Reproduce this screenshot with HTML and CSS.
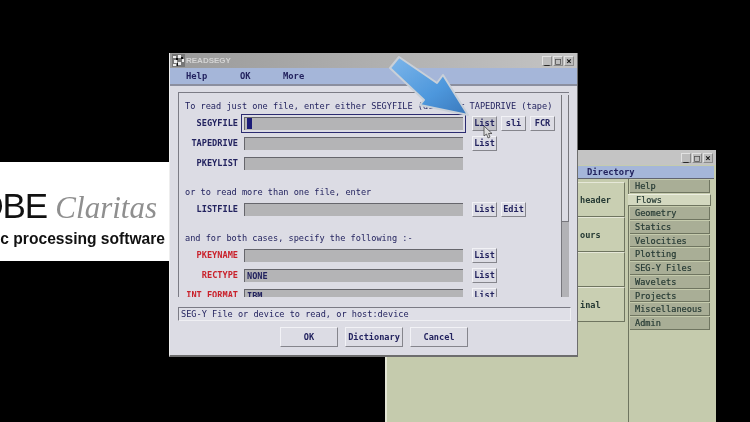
FILE: index.html
```html
<!DOCTYPE html>
<html lang="en">
<head>
    <meta charset="UTF-8">
    <title>READSEGY</title>
    <link rel="stylesheet" href="styles.css">
</head>
<body>
    <div class="desktop">
        <div class="logo">
            <div class="logo-name">GLOBE <em>Claritas</em></div>
            <div class="logo-sub">seismic processing software</div>
        </div>

        <!-- flow manager window behind the dialog -->
        <div class="flowwin">
            <div class="titlebar back-title">
                <span class="spacer"></span>
                <span class="winbtn">_</span><span class="winbtn">□</span><span class="winbtn">×</span>
            </div>
            <div class="back-menu"><span>Directory</span></div>
            <div class="back-body">
                <div class="back-left">
                    <div class="big-btn">header</div>
                    <div class="big-btn">ours</div>
                    <div class="big-btn"></div>
                    <div class="big-btn">inal</div>
                </div>
                <div class="back-right">
                    <div class="side-btn">Help</div>
                    <div class="side-btn active">Flows</div>
                    <div class="side-btn">Geometry</div>
                    <div class="side-btn">Statics</div>
                    <div class="side-btn">Velocities</div>
                    <div class="side-btn">Plotting</div>
                    <div class="side-btn">SEG-Y Files</div>
                    <div class="side-btn">Wavelets</div>
                    <div class="side-btn">Projects</div>
                    <div class="side-btn">Miscellaneous</div>
                    <div class="side-btn">Admin</div>
                </div>
            </div>
        </div>

        <!-- READSEGY dialog -->
        <div class="dialog">
            <div class="titlebar">
                <svg class="winicon" width="13" height="13" viewBox="0 0 13 13">
                    <rect width="13" height="13" fill="#777"/>
                    <path d="M1 2h3v2H1zM6 1h3v3H6zM10 5h2v3h-2zM2 6h3v3H2zM6 8h3v3H6zM1 10h3v2H1z" fill="#eee"/>
                    <path d="M4 4h2v2H4zM9 3h2v2H9zM5 9h1v3H5z" fill="#111"/>
                </svg>
                <span class="title-text">READSEGY</span>
                <span class="spacer"></span>
                <span class="winbtn">_</span><span class="winbtn">□</span><span class="winbtn">×</span>
            </div>
            <div class="menubar">
                <span>Help</span><span>OK</span><span>More</span>
            </div>
            <div class="pane">
                <div class="form">
                    <div class="note">To read just one file, enter either SEGYFILE (disk) or TAPEDRIVE (tape)</div>
                    <div class="row">
                        <label>SEGYFILE</label>
                        <div class="field focus"><span class="caret"></span></div>
                        <span class="btn hover">List</span><span class="btn">sli</span><span class="btn">FCR</span>
                    </div>
                    <div class="row">
                        <label>TAPEDRIVE</label>
                        <div class="field"></div>
                        <span class="btn">List</span>
                    </div>
                    <div class="row">
                        <label>PKEYLIST</label>
                        <div class="field"></div>
                    </div>
                    <div class="note gap">or to read more than one file, enter</div>
                    <div class="row">
                        <label>LISTFILE</label>
                        <div class="field"></div>
                        <span class="btn">List</span><span class="btn">Edit</span>
                    </div>
                    <div class="note gap">and for both cases, specify the following :-</div>
                    <div class="row">
                        <label class="req">PKEYNAME</label>
                        <div class="field"></div>
                        <span class="btn">List</span>
                    </div>
                    <div class="row">
                        <label class="req">RECTYPE</label>
                        <div class="field">NONE</div>
                        <span class="btn">List</span>
                    </div>
                    <div class="row">
                        <label class="req">INT FORMAT</label>
                        <div class="field">IBM</div>
                        <span class="btn">List</span>
                    </div>
                </div>
                <div class="scrollbar"><div class="thumb"></div></div>
            </div>
            <div class="message">SEG-Y File or device to read, or host:device</div>
            <div class="actions">
                <span class="action">OK</span>
                <span class="action">Dictionary</span>
                <span class="action">Cancel</span>
            </div>
        </div>

        <!-- tutorial arrow and mouse pointer on top -->
        <svg class="arrow" width="90" height="75" viewBox="0 0 90 75">
            <defs>
                <linearGradient id="arrowfill" x1="0" y1="0" x2="1" y2="1">
                    <stop offset="0" stop-color="#7db6ea"/>
                    <stop offset="0.6" stop-color="#4d97dc"/>
                    <stop offset="1" stop-color="#3a78bb"/>
                </linearGradient>
            </defs>
            <path d="M14 7 L5 18 L39 50 L35 55 L83 65 L58 25 L52 33 Z" fill="url(#arrowfill)" stroke="#c9d0d8" stroke-width="2" stroke-linejoin="round"/>
        </svg>
        <svg class="pointer" width="10" height="14" viewBox="0 0 10 14">
            <path d="M1 1 L1 11 L3.500 9 L5 13 L7 12 L5.500 8.500 L9 8.500 Z" fill="#ddd" stroke="#444" stroke-width="0.8"/>
        </svg>
    </div>
</body>
</html>
```

FILE: styles.css
```css
* {
    box-sizing: border-box;
}
html, body {
    margin: 0;
    height: 100%;
    background: #000;
}
body {
    font-family: "DejaVu Sans Mono", "Liberation Mono", monospace;
    font-size: 8.6px;
    color: #23235f;
}
.desktop {
    position: relative;
    width: 750px;
    height: 422px;
    overflow: hidden;
    background: #000;
    filter: blur(0.35px);
}
.spacer {
    flex: 1;
}

/* logo strip */
.logo {
    position: absolute;
    left: 0;
    top: 162px;
    width: 172px;
    height: 99px;
    background: #fff;
    display: flex;
    flex-direction: column;
    align-items: flex-end;
    padding: 26px 7px 0 0;
    white-space: nowrap;
    font-family: "Liberation Sans", sans-serif;
    color: #111;
}
.logo-name {
    font-size: 35px;
    line-height: 36px;
    letter-spacing: -1.2px;
    margin-right: 8px;
}
.logo-name em {
    font-family: "Liberation Serif", serif;
    font-size: 31px;
    color: #8f8f8f;
    letter-spacing: 0;
}
.logo-sub {
    font-size: 15.6px;
    font-weight: bold;
    line-height: 18px;
    margin-top: 4px;
}

/* window chrome */
.titlebar {
    display: flex;
    align-items: center;
    height: 15px;
    padding: 0 3px 0 2px;
    background: linear-gradient(90deg, #9a9a9a, #c4c4c4);
}
.winicon {
    margin-right: 1px;
}
.title-text {
    font-family: "Liberation Sans", sans-serif;
    font-size: 8px;
    font-weight: bold;
    color: #d4d4d4;
}
.winbtn {
    width: 10px;
    height: 10px;
    margin-left: 1px;
    background: #bdbdbd;
    border: 1px solid;
    border-color: #e2e2e2 #8a8a8a #8a8a8a #e2e2e2;
    color: #111;
    font-size: 9px;
    font-weight: bold;
    line-height: 8px;
    text-align: center;
}

/* dialog */
.dialog {
    position: absolute;
    left: 169px;
    top: 53px;
    width: 409px;
    height: 304px;
    background: #dcdce4;
    border-right: 1px solid #6d6d6d;
    border-bottom: 2px solid #6d6d6d;
    border-left: 1px solid #eee;
}
.menubar {
    display: flex;
    height: 18px;
    align-items: center;
    background: #a5b6d9;
    border-bottom: 2px solid #8b8f9f;
    padding-left: 16px;
    font-weight: bold;
    font-size: 8.800px;
}
.menubar span {
    width: 54px;
}
.menubar span:nth-child(2) {
    width: 43px;
}
.pane {
    display: flex;
    width: 391px;
    height: 205px;
    margin: 6px 0 0 8px;
    border-top: 1px solid #7b7b85;
    border-left: 1px solid #7b7b85;
    overflow: hidden;
}
.form {
    flex: 1;
    padding-top: 6px;
}
.note {
    height: 14px;
    line-height: 14px;
    padding-left: 6px;
    white-space: nowrap;
}
.note.gap {
    margin-top: 12px;
}
.row {
    display: flex;
    align-items: center;
    height: 20px;
    flex: none;
}
.row label {
    width: 59px;
    margin-right: 6px;
    text-align: right;
    font-weight: bold;
    white-space: nowrap;
}
.row label.req {
    color: #c9222c;
}
.field {
    display: flex;
    align-items: center;
    width: 219px;
    height: 13px;
    margin-right: 9px;
    padding-left: 2px;
    background: #b4b4b6;
    border-top: 1px solid #66666c;
    border-left: 1px solid #66666c;
    font-weight: bold;
}
.field.focus {
    outline: 1px solid #2b2b70;
    outline-offset: 2px;
}
.caret {
    width: 5px;
    height: 11px;
    background: #1c1c78;
}
.btn {
    width: 25px;
    height: 15px;
    margin-right: 4px;
    line-height: 13px;
    text-align: center;
    background: #dcdce4;
    border: 1px solid;
    border-color: #f2f2f6 #85858c #85858c #f2f2f6;
    font-weight: bold;
}
.btn.hover {
    background: #c3c3c9;
}
.scrollbar {
    flex: none;
    width: 8px;
    margin-top: 2px;
    background: #b2b2b6;
    border-left: 1px solid #77777d;
}
.thumb {
    height: 127px;
    background: #dcdce4;
    border-right: 1px solid #77777d;
    border-bottom: 1px solid #77777d;
}
.message {
    width: 393px;
    height: 14px;
    margin: 10px 0 0 8px;
    padding-left: 2px;
    line-height: 13px;
    background: #dfdfe7;
    border-top: 1px solid #7b7b85;
    border-left: 1px solid #7b7b85;
    border-bottom: 1px solid #efeff3;
    border-right: 1px solid #efeff3;
}
.actions {
    display: flex;
    gap: 7px;
    margin: 6px 0 0 110px;
}
.action {
    height: 20px;
    width: 58px;
    line-height: 18px;
    text-align: center;
    font-weight: bold;
    background: #dcdce4;
    border: 1px solid;
    border-color: #f2f2f6 #85858c #85858c #f2f2f6;
}

/* window behind the dialog */
.flowwin {
    position: absolute;
    left: 385px;
    top: 150px;
    width: 331px;
    height: 272px;
    background: #c5cbad;
    border-left: 2px solid #e3e5d5;
    color: #263a34;
}
.back-title {
    background: #c4c4c4;
}
.back-menu {
    height: 13px;
    margin: 1px 2px 0 0;
    padding-left: 200px;
    background: #a5b6d9;
    border-bottom: 1px solid #60636f;
    font-weight: bold;
    font-size: 8.800px;
    line-height: 12px;
    color: #23235f;
}
.back-body {
    display: flex;
    height: 244px;
}
.back-left {
    width: 241px;
    padding: 3px 3px 0 0;
    display: flex;
    flex-direction: column;
    gap: 0;
}
.big-btn {
    height: 35px;
    padding-left: 193px;
    line-height: 34px;
    font-weight: bold;
    background: #c9cfb2;
    border-right: 1px solid #6f7560;
    border-bottom: 1px solid #6f7560;
    border-top: 1px solid #e6e8d8;
}
.back-right {
    flex: 1;
    padding: 1px 6px 0 1px;
    border-left: 1px solid #6f7560;
    display: flex;
    flex-direction: column;
    gap: 1px;
}
.side-btn {
    height: 12.700px;
    padding-left: 5px;
    line-height: 12px;
    background: #a9ae96;
    border-right: 1px solid #6f7560;
    border-bottom: 1px solid #6f7560;
    -webkit-text-stroke: 0.2px #263a34;
}
.side-btn.active {
    margin: 0 -1px 0 -2px;
    padding-left: 8px;
    line-height: 11px;
    background: #d3d8bf;
    border-top: 1px solid #eceee0;
}

/* overlays */
.arrow {
    position: absolute;
    left: 385px;
    top: 50px;
}
.pointer {
    position: absolute;
    left: 483px;
    top: 125px;
}
```
